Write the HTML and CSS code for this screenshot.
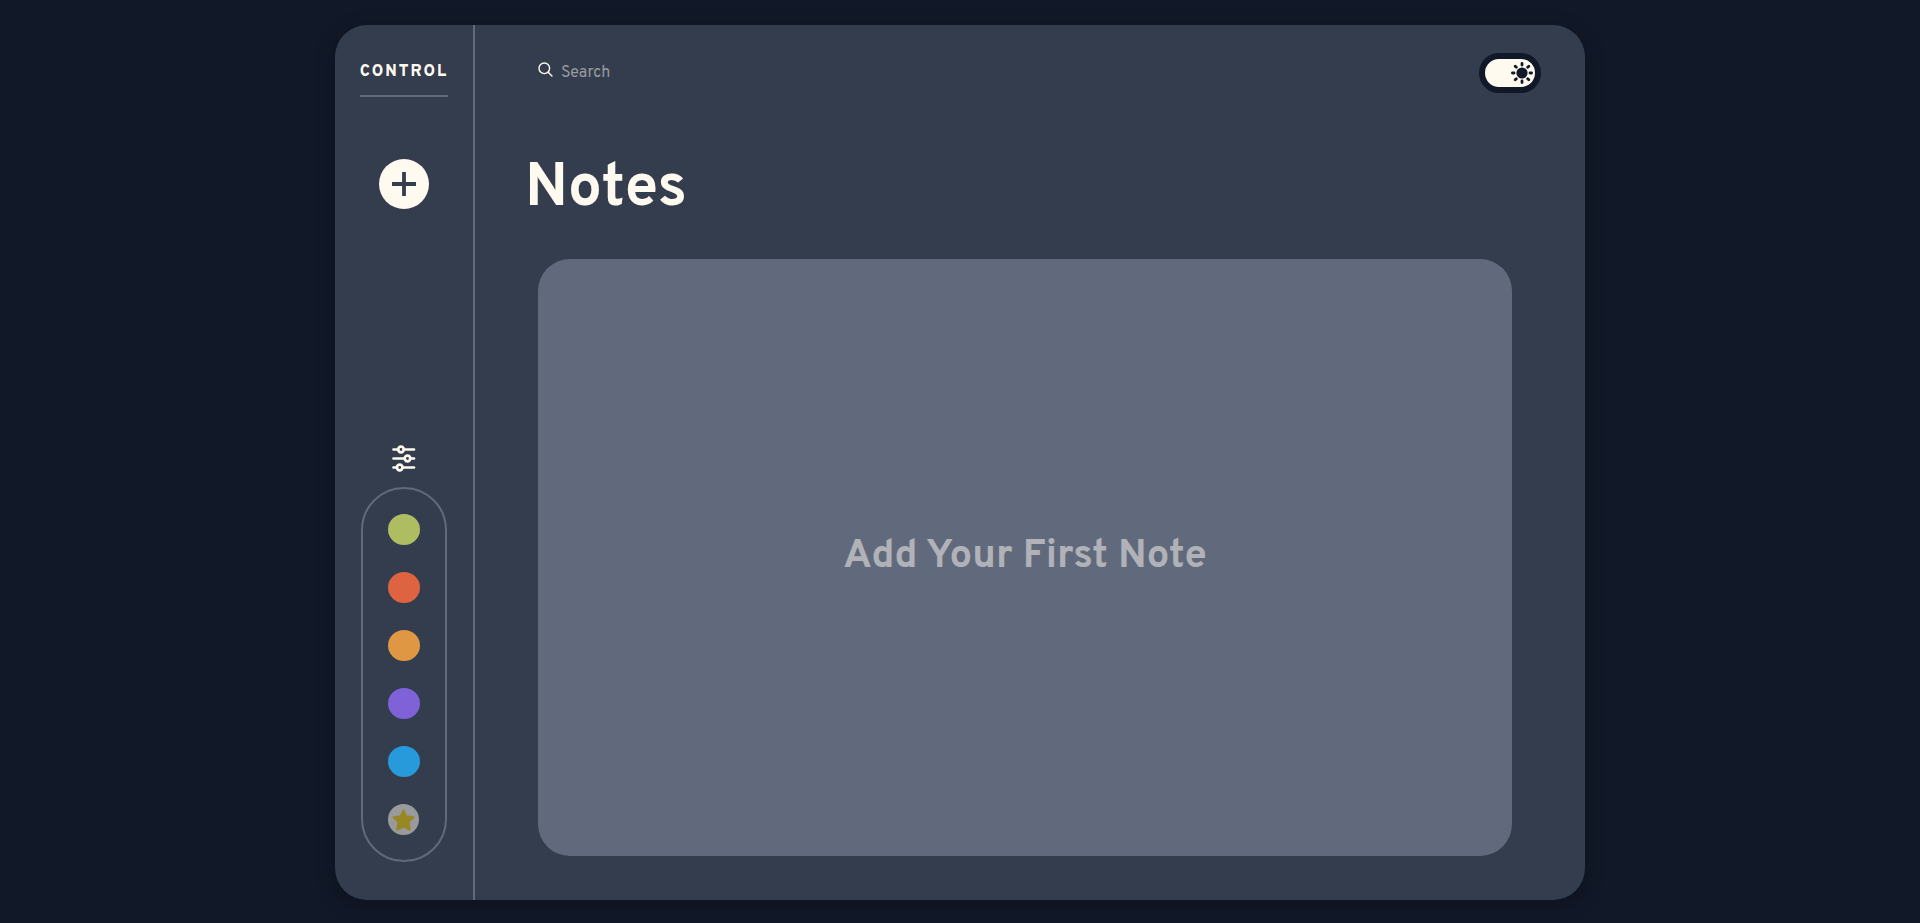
FILE: index.html
```html
<!DOCTYPE html>
<html lang="en">
<head>
<meta charset="utf-8">
<meta name="viewport" content="width=device-width, initial-scale=1">
<title>Notes</title>
<link rel="stylesheet" href="styles.css">
</head>
<body>
<div class="app">
  <aside class="sidebar">
    <div class="brand">CONTROL</div>
    <button class="add" type="button" aria-label="Add note">
      <svg width="24" height="24" viewBox="0 0 24 24"><path d="M12 0v24M0 12h24" stroke="currentColor" stroke-width="3.8"/></svg>
    </button>
    <div class="filters">
      <svg class="sliders" width="24" height="28" viewBox="0 0 24 28" fill="none" stroke="currentColor" stroke-width="2.7" stroke-linecap="round">
        <path d="M1.500 4.500H6M12 4.500H22M1.500 13.500H12.500M19 13.500H22M1.500 22.500H5M11 22.500H22"/>
        <circle cx="9" cy="4.500" r="2.800"/><circle cx="15.500" cy="13.500" r="2.800"/><circle cx="7.700" cy="22.500" r="2.800"/>
      </svg>
      <div class="colors">
        <button class="dot green" type="button" aria-label="Green notes"></button>
        <button class="dot red" type="button" aria-label="Red notes"></button>
        <button class="dot orange" type="button" aria-label="Orange notes"></button>
        <button class="dot purple" type="button" aria-label="Purple notes"></button>
        <button class="dot blue" type="button" aria-label="Blue notes"></button>
        <button class="dot star" type="button" aria-label="Favourite notes">
          <svg width="23" height="22" viewBox="0 0 23 22"><path d="M11.500 1.500L14.300 7.300L21.500 8.300L16.500 13L17.800 20.500L11.500 17.500L5.200 20.500L6.500 13L1.500 8.300L8.700 7.300Z" fill="#988825" stroke="#988825" stroke-width="2" stroke-linejoin="round"/></svg>
        </button>
      </div>
    </div>
  </aside>
  <main class="main">
    <header class="topbar">
      <label class="search">
        <svg width="15" height="15" viewBox="0 0 15 15" fill="none" stroke="currentColor" stroke-width="1.4" stroke-linecap="round"><circle cx="6.300" cy="6.300" r="5.300"/><path d="M10.200 10.200L14 14"/></svg>
        <input type="text" placeholder="Search" aria-label="Search">
      </label>
      <button class="theme" type="button" aria-label="Switch theme">
        <svg width="22" height="22" viewBox="0 0 22 22" stroke="currentColor" stroke-width="2.800" stroke-linecap="round"><circle cx="11" cy="11" r="5.600" fill="currentColor" stroke="none"/><path d="M11 1.400V3M11 19V20.600M1.400 11H3M19 11H20.600M4.200 4.200L5.300 5.300M16.700 16.700L17.800 17.800M17.800 4.200L16.700 5.300M5.300 16.700L4.200 17.800"/></svg>
      </button>
    </header>
    <h1 class="title">Notes</h1>
    <section class="board"><p class="empty">Add Your First Note</p></section>
  </main>
</div>
</body>
</html>
```
FILE: styles.css
```css
* { box-sizing: border-box; }

body {
  margin: 0;
  min-height: 100vh;
  padding: 25px 24px 23px;
  display: flex;
  justify-content: center;
  background: #111827;
  color: #fffaf0;
  font-family: Overpass, Roboto, "Liberation Sans", sans-serif;
}

button { border: 0; padding: 0; cursor: pointer; }
svg { display: block; }

.app {
  width: 100%;
  max-width: 1250px;
  display: flex;
  border-radius: 32px;
  background: #333d4d;
  box-shadow: 0 5px 20px rgba(0, 0, 0, 0.25);
}

.sidebar {
  flex: none;
  width: 140px;
  padding: 32px 24px 38px;
  display: flex;
  flex-direction: column;
  align-items: center;
  border-right: 2px solid #616a7c;
}

.brand {
  padding: 6px 0 14px;
  border-bottom: 2px solid #616a7c;
  font-size: 16px;
  line-height: 18px;
  font-weight: 800;
  letter-spacing: 2px;
}

.add {
  width: 50px;
  height: 50px;
  margin-top: 62px;
  display: grid;
  place-items: center;
  border-radius: 50%;
  background: #fffaf0;
  color: #333d4d;
}

.filters {
  margin-top: auto;
  display: flex;
  flex-direction: column;
  align-items: center;
  gap: 14px;
}

.colors {
  width: 86px;
  padding: 25px 0 25px 25px;
  display: flex;
  flex-direction: column;
  align-items: flex-start;
  gap: 27px;
  border: 2px solid #616a7c;
  border-radius: 43px;
}

.dot { width: 32px; height: 31px; border-radius: 50%; }
.green { background: #aebd62; }
.red { background: #de6340; }
.orange { background: #df9744; }
.purple { background: #7f62d7; }
.blue { background: #279adb; }
.star {
  width: 31px;
  display: grid;
  place-items: center;
  background: #999a9e;
}

.main {
  flex: 1;
  min-width: 0;
  padding: 28px 44px 44px 50px;
  display: flex;
  flex-direction: column;
}

.topbar {
  display: flex;
  justify-content: space-between;
  align-items: flex-start;
}

.search {
  padding: 9px 0 0 13px;
  display: flex;
  align-items: flex-start;
  gap: 8px;
}

.search input {
  width: 240px;
  height: 22px;
  padding: 0;
  border: 0;
  outline: 0;
  background: transparent;
  color: inherit;
  font: 400 16px/22px Overpass, Roboto, sans-serif;
}

.search input::placeholder { color: #999a9e; opacity: 1; }

.theme {
  width: 62px;
  height: 40px;
  padding-right: 2px;
  display: flex;
  justify-content: flex-end;
  align-items: center;
  border: 6px solid #111827;
  border-radius: 20px;
  background: #fffaf0;
  color: #111827;
}

.title {
  margin: 62px 0 34px;
  font-size: 60px;
  line-height: 70px;
  font-weight: 700;
}

.board {
  flex: 1;
  margin: 0 29px 0 13px;
  padding: 24px;
  display: grid;
  place-items: center;
  border-radius: 32px;
  background: #616a7c;
}

.empty {
  margin: 0;
  padding-bottom: 2px;
  color: #b0b2b8;
  font-size: 40px;
  line-height: 48px;
  font-weight: 700;
  text-align: center;
}
```
